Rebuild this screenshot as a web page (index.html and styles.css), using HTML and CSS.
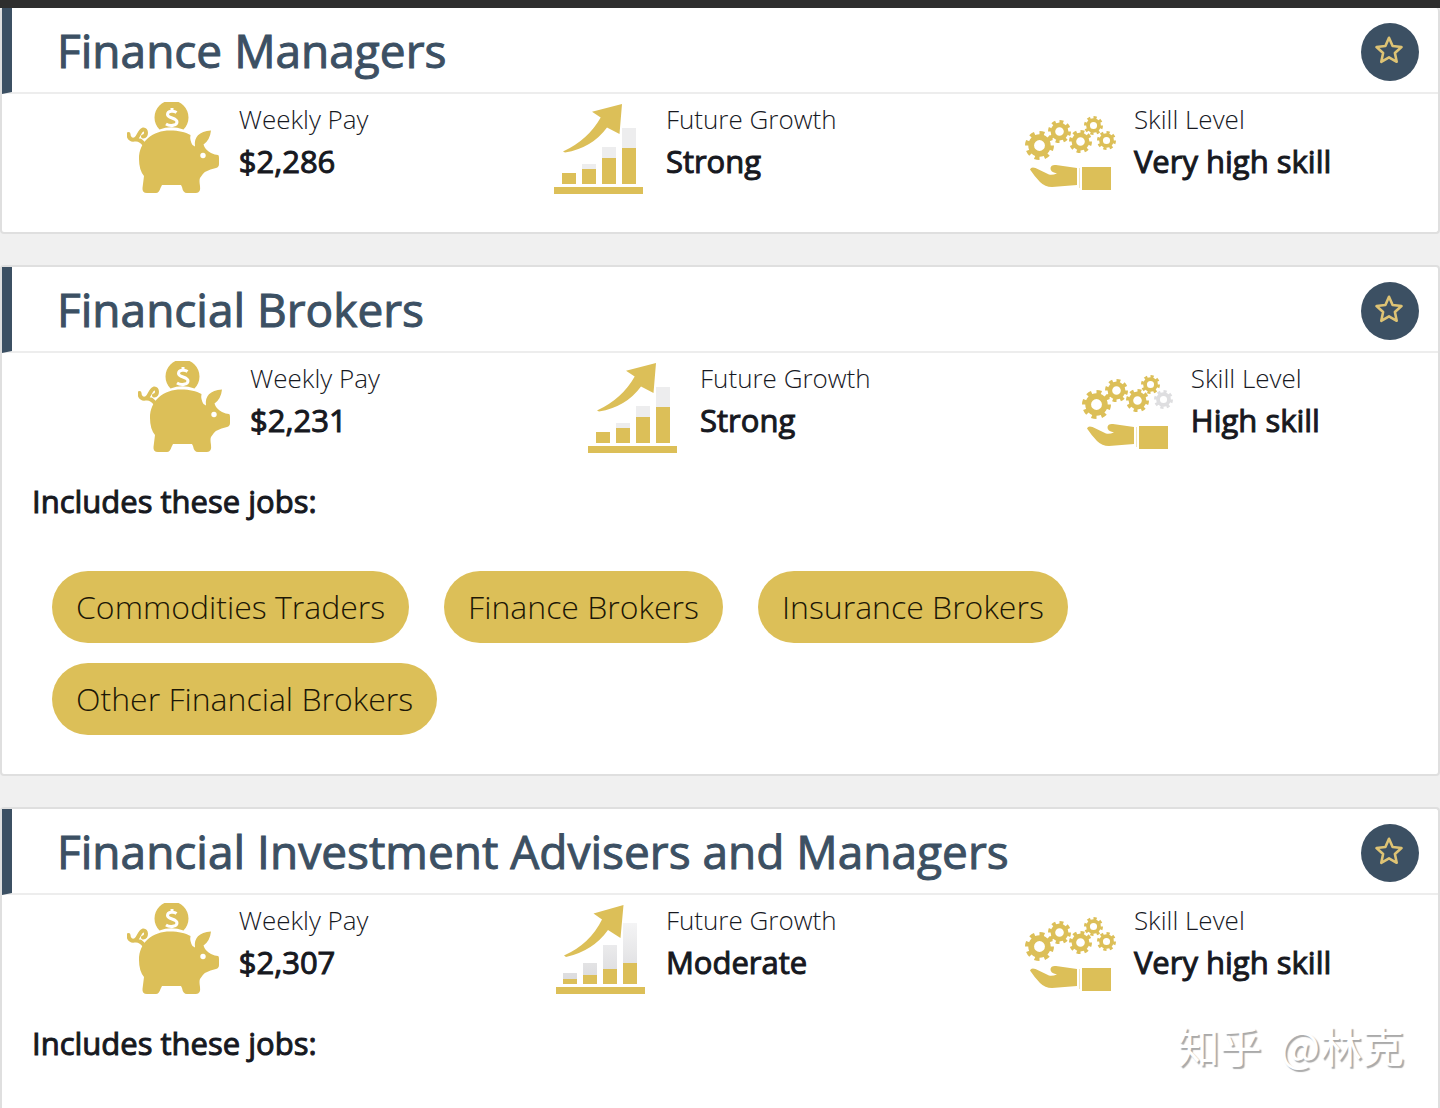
FILE: index.html
```html
<!DOCTYPE html>
<html lang="en">
<head>
<meta charset="utf-8">
<title>Occupations</title>
<link rel="stylesheet" href="styles.css">
</head>
<body>
<svg class="sprite" aria-hidden="true">
  <defs>
    <linearGradient id="fade" x1="0" y1="0" x2="0" y2="1">
      <stop offset="0" stop-color="#f4f4f5"/>
      <stop offset="1" stop-color="#dcdcde"/>
    </linearGradient>
  </defs>
  <symbol id="star" viewBox="0 0 30 30">
    <path d="M15 2.800l3.600 8.200 8.900 1-6.600 6 1.800 8.800-7.700-4.500-7.700 4.500L9.100 18l-6.600-6 8.900-1z" fill="none" stroke="#dec374" stroke-width="2.600" stroke-linejoin="round"/>
  </symbol>
  <symbol id="pig" viewBox="0 0 92 92">
    <path d="M32.500 27.500A17 17 0 1 1 56.500 27.500Q44 23 32.500 27.500z" fill="#dcbf58"/>
    <path d="M49.500 10.500C47 8.500 40.500 8.700 40.500 12.500C40.500 16.500 50 15.500 50 20C50 24 42.500 24.300 39 22M45 6V10M45 22V25" fill="none" stroke="#fff" stroke-width="3"/>
    <path d="M1.500 32C1.500 36.500 5 39 8.500 37C12 35 12 29 16 27.500C20 27 20 34 16 34.500M9 37.500Q14 37.500 17.500 43" fill="none" stroke="#dcbf58" stroke-width="4" stroke-linecap="round"/>
    <path d="M12 57C12 39 26 28.500 43 28.500C52 28.500 58 30 63.500 33Q62.500 38 65.500 43L68 44.500Q66 30 84 28.500Q83 38 76.500 42.500Q78 48 84 51Q88 53 91 53Q92 53 92 56V62Q92 65 89 66Q77 68 73 76Q72 78 73 84Q74 91 69 91H60Q56 91 55 85L54 83H35L33.500 86Q32 91 29 91H20Q15 91 15.500 86L17 74Q12 68 12 57z" fill="#dcbf58"/>
    <circle cx="76" cy="53.500" r="2.700" fill="#fff"/>
  </symbol>
  <symbol id="growth-strong" viewBox="0 0 92 92">
    <path d="M28 62h14v5H28zM48 45h14v11H48zM68 26h14v20H68z" fill="#ededee"/>
    <path d="M0 85h89v7H0zM8 71h14v11H8zM28 67h14v15H28zM48 56h14v26H48zM68 46h14v36H68z" fill="#dcbf58"/>
    <path d="M68 2L38 9.700L46.700 15.500Q34 38 9 49.500L11 50.500Q38 46 53 25.500L65.500 32z" fill="#dcbf58"/>
  </symbol>
  <symbol id="growth-moderate" viewBox="0 0 92 92">
    <path d="M9 70h14v6H9zM29 60h14v12H29zM49 42h14v24H49zM69 20h14v40H69z" fill="url(#fade)"/>
    <path d="M2 84h89v7H2zM9 76h14v5H9zM29 72h14v9H29zM49 66h14v15H49zM69 60h14v21H69z" fill="#dcbf58"/>
    <path d="M69.500 2L39.500 10.500L48 16.500Q36 41 10 52.500L12 54Q39 48 54 27L66.500 35z" fill="#dcbf58"/>
  </symbol>
  <symbol id="gear" viewBox="0 0 40 40">
    <circle cx="20" cy="20" r="11.500" fill="none" stroke="currentColor" stroke-width="8"/>
    <circle cx="20" cy="20" r="17" fill="none" stroke="currentColor" stroke-width="6" pathLength="16" stroke-dasharray="1 1"/>
  </symbol>
  <symbol id="hand" viewBox="0 0 92 92">
    <use href="#gear" x="3" y="29" width="29" height="29"/>
    <use href="#gear" x="26" y="18" width="23" height="23"/>
    <use href="#gear" x="47" y="28" width="23" height="23"/>
    <use href="#gear" x="62" y="14" width="19" height="19"/>
    <path d="M8 67.500Q9 64.500 13.500 66L27 72.500Q30 73.500 35 71.500Q28 70 28.500 66Q29 62.500 34 63L55 66V83L30 85Q23 85 18 80Q13 75 8 67.500zM60 65h29v23H60z" fill="currentColor"/>
    <path d="M57.500 66v20" stroke="currentColor" stroke-opacity=".4" fill="none"/>
  </symbol>
</svg>

<main class="results">
  <article class="card">
    <header class="card-head">
      <h2 class="title">Finance Managers</h2>
      <button class="fav" type="button" aria-label="Save Finance Managers"><svg class="fav-icon"><use href="#star"/></svg></button>
    </header>
    <dl class="stats">
      <div class="stat">
        <svg class="icon" viewBox="0 0 92 92"><use href="#pig"/></svg>
        <div><dt class="label">Weekly Pay</dt><dd class="value">$2,286</dd></div>
      </div>
      <div class="stat">
        <svg class="icon" viewBox="0 0 92 92"><use href="#growth-strong"/></svg>
        <div><dt class="label">Future Growth</dt><dd class="value">Strong</dd></div>
      </div>
      <div class="stat">
        <svg class="icon" viewBox="0 0 92 92"><use href="#hand"/><use href="#gear" x="75" y="29" width="19" height="19"/></svg>
        <div><dt class="label">Skill Level</dt><dd class="value">Very high skill</dd></div>
      </div>
    </dl>
  </article>

  <article class="card">
    <header class="card-head">
      <h2 class="title">Financial Brokers</h2>
      <button class="fav" type="button" aria-label="Save Financial Brokers"><svg class="fav-icon"><use href="#star"/></svg></button>
    </header>
    <dl class="stats">
      <div class="stat">
        <svg class="icon" viewBox="0 0 92 92"><use href="#pig"/></svg>
        <div><dt class="label">Weekly Pay</dt><dd class="value">$2,231</dd></div>
      </div>
      <div class="stat">
        <svg class="icon" viewBox="0 0 92 92"><use href="#growth-strong"/></svg>
        <div><dt class="label">Future Growth</dt><dd class="value">Strong</dd></div>
      </div>
      <div class="stat">
        <svg class="icon" viewBox="0 0 92 92"><use href="#hand"/><use class="gear-off" href="#gear" x="75" y="29" width="19" height="19"/></svg>
        <div><dt class="label">Skill Level</dt><dd class="value">High skill</dd></div>
      </div>
    </dl>
    <h3 class="jobs-title">Includes these jobs:</h3>
    <ul class="jobs">
      <li><a class="job" href="#">Commodities Traders</a></li>
      <li><a class="job" href="#">Finance Brokers</a></li>
      <li><a class="job" href="#">Insurance Brokers</a></li>
      <li><a class="job" href="#">Other Financial Brokers</a></li>
    </ul>
  </article>

  <article class="card card-open">
    <header class="card-head">
      <h2 class="title">Financial Investment Advisers and Managers</h2>
      <button class="fav" type="button" aria-label="Save Financial Investment Advisers and Managers"><svg class="fav-icon"><use href="#star"/></svg></button>
    </header>
    <dl class="stats">
      <div class="stat">
        <svg class="icon" viewBox="0 0 92 92"><use href="#pig"/></svg>
        <div><dt class="label">Weekly Pay</dt><dd class="value">$2,307</dd></div>
      </div>
      <div class="stat">
        <svg class="icon" viewBox="0 0 92 92"><use href="#growth-moderate"/></svg>
        <div><dt class="label">Future Growth</dt><dd class="value">Moderate</dd></div>
      </div>
      <div class="stat">
        <svg class="icon" viewBox="0 0 92 92"><use href="#hand"/><use href="#gear" x="75" y="29" width="19" height="19"/></svg>
        <div><dt class="label">Skill Level</dt><dd class="value">Very high skill</dd></div>
      </div>
    </dl>
    <h3 class="jobs-title">Includes these jobs:</h3>
  </article>
</main>
<p class="watermark" lang="zh">知乎&nbsp; @林克</p>
</body>
</html>
```

FILE: styles.css
```css
* { box-sizing: border-box; }

body {
  margin: 0;
  min-height: 100vh;
  display: flex;
  flex-direction: column;
  position: relative;
  border-top: 8px solid #2e2e2e;
  background: #f0f0f0;
  color: #17191f;
  font-family: "Open Sans", sans-serif;
}

h2, h3, dl, dd, ul, p { margin: 0; padding: 0; }

.sprite { position: absolute; width: 0; height: 0; }

.results {
  flex: 1;
  display: flex;
  flex-direction: column;
  gap: 31px;
}

.card {
  border: 2px solid #dfdfdf;
  border-radius: 4px;
  background: #fff;
  padding-bottom: 38px;
}
.card:first-child { border-top: 0; }
.card-open {
  flex: 1;
  border-bottom: 0;
  border-radius: 4px 4px 0 0;
}

.card-head {
  display: flex;
  align-items: center;
  justify-content: space-between;
  height: 86px;
  padding: 4px 19px 0 45px;
  border-left: 10px solid #3c5063;
  border-bottom: 2px solid #ededed;
}

.title {
  padding-bottom: 4px;
  color: #3c5063;
  font-size: 46px;
  line-height: 64px;
  font-weight: 400;
  -webkit-text-stroke: 1px #3c5063;
}

.fav {
  display: grid;
  place-items: center;
  width: 58px;
  height: 58px;
  padding: 0 2px 4px 0;
  border: 0;
  border-radius: 50%;
  background: #3c5063;
}
.fav-icon { width: 30px; height: 30px; }

.stats {
  display: flex;
  justify-content: space-around;
  padding: 8px 14px 0 32px;
}
.stat { display: flex; gap: 20px; }
.icon { width: 92px; height: 92px; color: #dcbf58; overflow: visible; }
.gear-off { color: #dedee0; }

.label {
  font-size: 26px;
  line-height: 34px;
  font-weight: 300;
}
.value {
  font-size: 31px;
  line-height: 50px;
  -webkit-text-stroke: 1px #17191f;
}

.jobs-title {
  margin: 25px 30px 0;
  font-size: 31px;
  line-height: 46px;
  font-weight: 400;
  -webkit-text-stroke: 1px #17191f;
}

.jobs {
  display: flex;
  flex-wrap: wrap;
  gap: 20px 35px;
  padding: 47px 50px 1px;
  list-style: none;
}
.job {
  display: block;
  padding: 0 24px;
  border-radius: 36px;
  background: #dcbf58;
  color: #1c1706;
  font-size: 32px;
  line-height: 72px;
  font-weight: 300;
  text-decoration: none;
}

.watermark {
  position: absolute;
  right: 36px;
  bottom: 31px;
  color: #fff;
  font-family: "Noto Sans CJK SC", sans-serif;
  font-size: 42px;
  line-height: 64px;
  text-shadow: 2px 2px 1px #aaa;
}
```
